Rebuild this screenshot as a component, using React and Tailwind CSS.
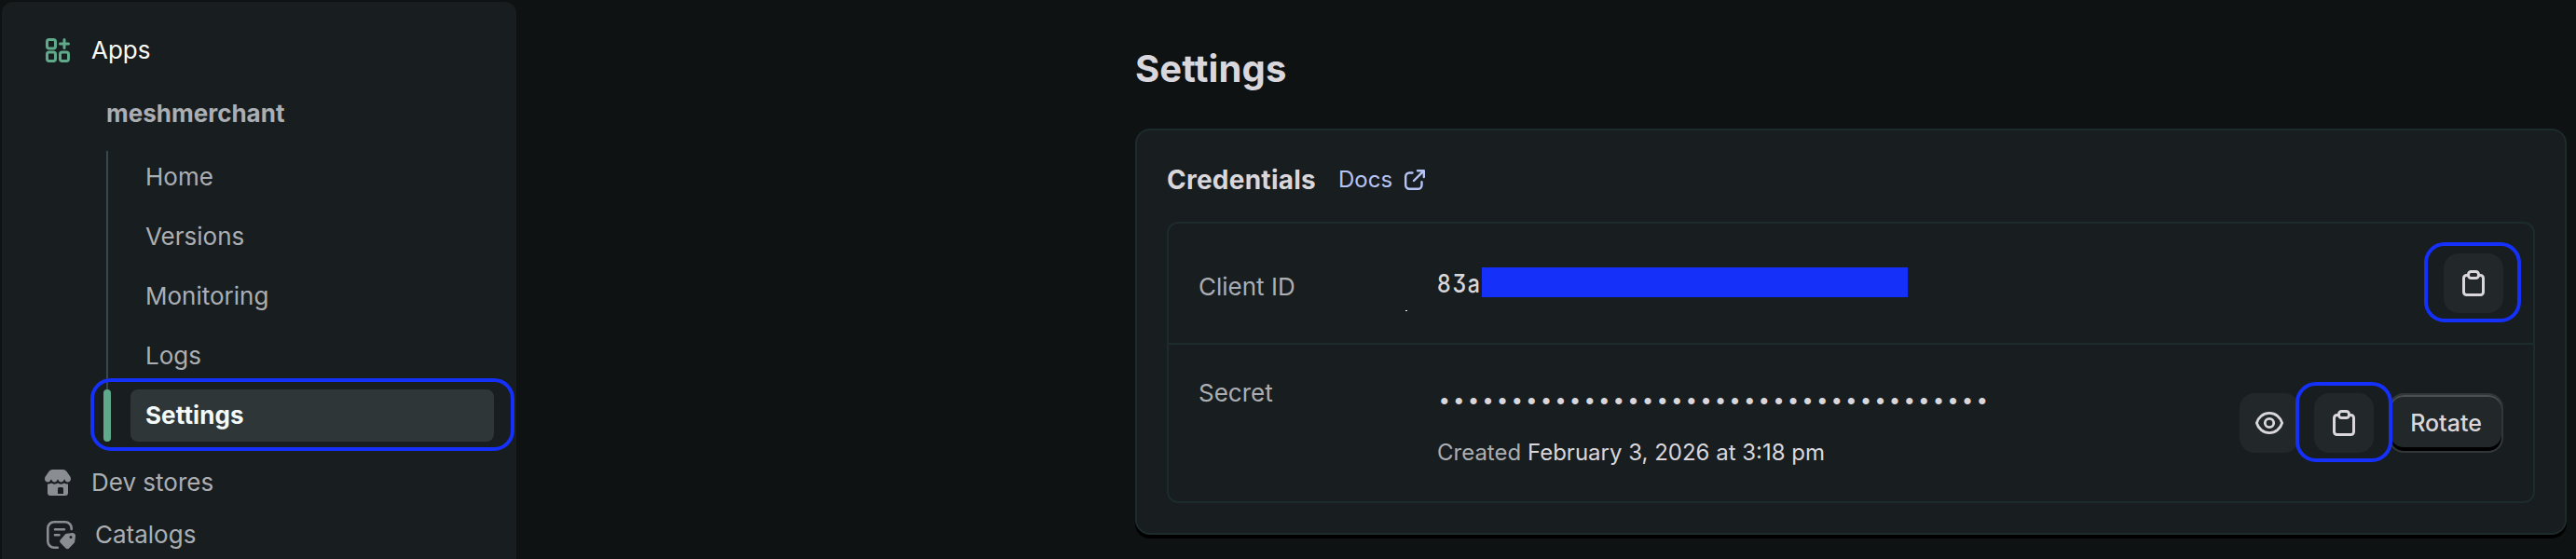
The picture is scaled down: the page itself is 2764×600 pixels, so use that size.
const ring = "pointer-events-none absolute rounded-[22px] border-4 border-[#1530f9]";

function AppsIcon() {
  return (
    <svg className="h-[26px] w-[26px] shrink-0" viewBox="0 0 26 26" fill="none" stroke="#5faa8a" strokeWidth="3" strokeLinecap="round">
      <rect x="1.5" y="1.5" width="9" height="9.500" rx="2.2" />
      <rect x="1.5" y="15" width="9" height="9.500" rx="2.2" />
      <rect x="15.5" y="15" width="9" height="9.500" rx="2.2" />
      <path d="M20 1.5v9M15.500 6h9" />
    </svg>
  );
}

function StoreIcon() {
  return (
    <svg className="h-7 w-7 shrink-0" viewBox="0 0 28 28" fill="#8a8d91">
      <path d="M8.500 0h11c1.700 0 3 .7 4 2.100L27.300 7.500c.5.800.7 1.600.7 2.500 0 2-1.500 3.500-3.400 3.500-1.500 0-2.700-1.300-3.500-3.300-.8 2-2 3.300-3.600 3.300-1.500 0-2.700-1.300-3.500-3.300-.8 2-2 3.300-3.500 3.300-1.600 0-2.800-1.300-3.600-3.300-.8 2-2 3.300-3.500 3.300C1.500 13.500 0 12 0 10c0-.9.200-1.700.7-2.500L4.500 2.100C5.500.7 6.800 0 8.500 0z" />
      <path fillRule="evenodd" d="M3 15.500c1.500.2 2.900-.1 4-1 2 1.500 5 1.500 7 0 2 1.500 5 1.500 7 0 1.100.9 2.500 1.200 4 1V25a3 3 0 0 1-3 3H6a3 3 0 0 1-3-3zM15.500 19a1.500 1.500 0 0 0-1.500 1.500V26h6v-5.500a1.500 1.500 0 0 0-1.500-1.500z" />
    </svg>
  );
}

function CatalogIcon() {
  return (
    <svg className="h-[31px] w-[31px] shrink-0" viewBox="0 0 31 31" fill="none" stroke="#8a8d91" strokeWidth="2.600" strokeLinecap="round">
      <path d="M11.800 28.700H8A6.700 6.700 0 0 1 1.300 22V8A6.700 6.700 0 0 1 8 1.300h12A6.700 6.700 0 0 1 26.700 8v1" />
      <path d="M9 9.300h10M9 15.300h4.500" />
      <path fillRule="evenodd" stroke="none" fill="#8a8d91" d="M21.500 13.800l6-.8c2-.2 3.700 1.400 3.500 3.400l-.8 6.100c-.1.600-.4 1.200-.8 1.600l-5.300 5.300c-1 1-2.600 1-3.600 0l-5.600-5.600c-1-1-1-2.600 0-3.600l5-5.600c.4-.4 1-.7 1.600-.8zM26 16a1.500 1.500 0 1 0 0 3 1.500 1.500 0 0 0 0-3z" />
    </svg>
  );
}

function ClipboardIcon() {
  return (
    <svg className="h-7 w-6" viewBox="0 0 24 28" fill="none" stroke="#d9d7dc" strokeWidth="3">
      <path d="M6 5.500H4.500a3 3 0 0 0-3 3v15a3 3 0 0 0 3 3h15a3 3 0 0 0 3-3v-15a3 3 0 0 0-3-3H18" />
      <rect x="6.500" y="1.500" width="11" height="7" rx="3" />
    </svg>
  );
}

function EyeIcon() {
  return (
    <svg className="h-6 w-[30px]" viewBox="0 0 30 24" fill="none" stroke="#d9d7dc" strokeWidth="2.800">
      <path d="M1.400 12C3.200 5.600 8.500 1.400 15 1.400S26.800 5.600 28.600 12C26.800 18.400 21.500 22.600 15 22.600S3.200 18.400 1.400 12z" strokeLinejoin="round" />
      <circle cx="15" cy="12" r="4.700" />
    </svg>
  );
}

function ExternalIcon() {
  return (
    <svg className="h-[22px] w-[22px]" viewBox="0 0 22 22" fill="none" stroke="#b6c4f5" strokeWidth="2.400" strokeLinecap="round" strokeLinejoin="round">
      <path d="M8.500 3.500H5.200A4 4 0 0 0 1.200 7.500v9.300a4 4 0 0 0 4 4h9.300a4 4 0 0 0 4-4v-3.500" />
      <path d="M14 1.200h6.800V8M20.500 1.500L10 12" />
    </svg>
  );
}

function IconButton({ children, ringClass }) {
  return (
    <div className="relative flex h-16 w-16 items-center justify-center rounded-2xl bg-[#22282a]">
      {children}
      {ringClass && <div className={`${ring} -top-3 z-10 h-[86px] w-[104px] ${ringClass}`} />}
    </div>
  );
}

const links = ["Home", "Versions", "Monitoring", "Logs"];

function Sidebar() {
  return (
    <nav className="mt-0.5 ml-0.5 h-[598px] w-[552px] shrink-0 overflow-hidden rounded-t-xl bg-[#181d1f] text-[26px] leading-8 text-[#abaeb3]">
      <div className="mt-9 ml-[47px] flex h-8 items-center gap-[23px] text-[#f4fafa]">
        <AppsIcon />
        <span>Apps</span>
      </div>
      <div className="mt-9 ml-[112px] h-8 font-bold">meshmerchant</div>
      <div className="relative mt-6 ml-[112px] w-[416px]">
        <div className="h-64 border-l-2 border-[#36474d]">
          {links.map((name) => (
            <div key={name} className="flex h-16 items-center pl-10">
              <span className="-mt-[9px]">{name}</span>
            </div>
          ))}
        </div>
        <div className="-ml-[3px] flex h-14 gap-[21px]">
          <div className="w-2 rounded-full bg-[#5faa8a]" />
          <div className="flex w-[390px] items-center rounded-lg bg-[#2f3638] pl-4 font-bold tracking-[0.1px] text-[#f4fafa]">
            Settings
          </div>
        </div>
        <div className={ring + " -bottom-[10px] -left-[17px] h-[78px] w-[455px]"} />
      </div>
      <div className="mt-7 ml-[46px] flex h-8 items-center gap-[22px]">
        <StoreIcon />
        <span>Dev stores</span>
      </div>
      <div className="mt-6 ml-12 flex h-8 items-center gap-[21px]">
        <CatalogIcon />
        <span>Catalogs</span>
      </div>
    </nav>
  );
}

export default function App() {
  return (
    <div className="flex h-[600px] w-[2764px] overflow-hidden bg-[#0e1213] font-['Inter',sans-serif]">
      <Sidebar />
      <main className="ml-[664px] w-[1536px] pt-[49px]">
        <h1 className="h-[89px] text-[40px] leading-[50px] font-bold tracking-[0.15px] text-[#d9d7dc]">Settings</h1>
        <section className="h-[436px] rounded-2xl border-2 border-[#1d2b2d] bg-[#181d1f] px-8 shadow-[0_4px_0_#000]">
          <div className="flex h-[98px] items-center pt-2">
            <h2 className="w-[184px] text-[28px] font-bold tracking-[0.25px] text-[#d9d7dc]">Credentials</h2>
            <a className="flex items-center gap-[13px] text-[24px] text-[#b6c4f5]">
              Docs
              <ExternalIcon />
            </a>
          </div>
          <div className="h-[302px] rounded-xl border-2 border-[#1d2b2d] text-[26px] leading-8">
            <div className="relative flex h-[130px] items-start border-b-2 border-[#1d2b2d] pr-8 pl-8">
              <span className="mt-[52px] w-[256px] text-[#abaeb3]">Client ID</span>
              <div className="mt-[47px] flex h-8 items-center">
                <span className="w-12 pt-[3px]">
                  <span className="inline-block origin-left scale-x-[0.86] text-[27px] font-medium tracking-[2.1px] text-[#d9d7dc] [font-feature-settings:'cv09']">
                    83a
                  </span>
                </span>
                <div className="h-8 w-[457px] bg-[#1530f9]" />
              </div>
              <div className="mt-8 ml-auto">
                <IconButton ringClass="-left-[21px]">
                  <ClipboardIcon />
                </IconButton>
              </div>
              <div className="absolute top-[93px] left-[254px] h-px w-0.5 bg-white" />
            </div>
            <div className="flex h-[168px] items-start pr-8 pl-8">
              <span className="mt-[36px] w-[256px] text-[#abaeb3]">Secret</span>
              <div className="mt-[46px]">
                <div className="h-8 font-['Liberation_Mono',monospace] tracking-[-0.01px] text-[#d9d7dc]">{"•".repeat(38)}</div>
                <div className="mt-[22px] text-[24px] text-[#abaeb3]">
                  Created <span className="text-[#d9d7dc]">February 3, 2026 at 3:18 pm</span>
                </div>
              </div>
              <div className="mt-[52px] ml-auto flex gap-4">
                <IconButton>
                  <EyeIcon />
                </IconButton>
                <IconButton ringClass="-left-5">
                  <ClipboardIcon />
                </IconButton>
                <button className="flex h-16 w-[123px] items-center justify-center rounded-2xl border-2 border-[#323739] bg-[#22282a] text-[25px] font-medium text-[#d9d7dc] shadow-[inset_0_2px_0_#4a4f51,inset_0_-4px_0_#000]">
                  Rotate
                </button>
              </div>
            </div>
          </div>
        </section>
      </main>
    </div>
  );
}
